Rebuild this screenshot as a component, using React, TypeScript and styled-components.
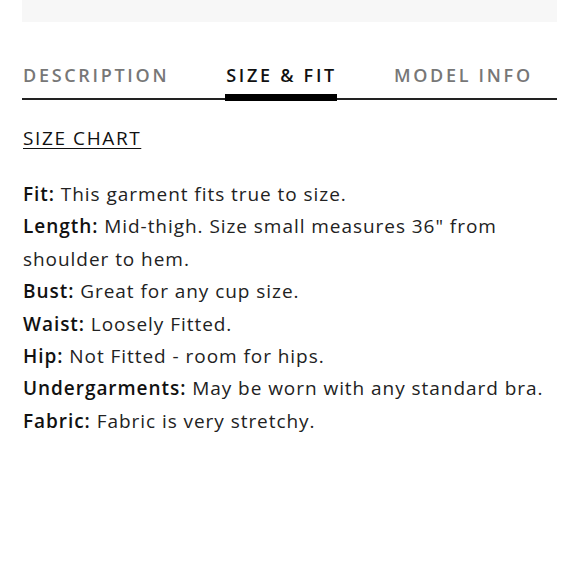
import React from "react";
import styled, { createGlobalStyle } from "styled-components";

const Global = createGlobalStyle`
  html, body { margin: 0; padding: 0; background: #fff; }
  body { font-family: "Open Sans", sans-serif; color: #222; }
`;

const Page = styled.div`
  width: 580px;
  padding: 0 23px 0 22px;
  box-sizing: border-box;
`;

const TopPanel = styled.div`
  height: 22px;
  background: #f7f7f7;
`;

const TabList = styled.div`
  display: flex;
  align-items: flex-end;
  gap: 56px;
  margin-top: 42px;
  border-bottom: 2px solid #222;
`;

const Tab = styled.div<{ $active?: boolean }>`
  font-family: "Open Sans", sans-serif;
  font-weight: 600;
  font-size: 18px;
  line-height: 22px;
  letter-spacing: 2.7px;
  color: ${(p) => (p.$active ? "#111" : "#777")};
  padding: 0 0 8px 1px;
  border-bottom: 7px solid ${(p) => (p.$active ? "#000" : "transparent")};
  margin-bottom: -3px;
  white-space: nowrap;
`;

const Content = styled.div`
  padding: 26px 0 0 1px;
`;

const ChartLink = styled.a`
  display: inline-block;
  font-size: 19px;
  line-height: 24px;
  letter-spacing: 1.6px;
  color: #111;
  text-decoration: underline;
  text-underline-offset: 3px;
  text-decoration-thickness: 1px;
`;

const Specs = styled.div`
  margin-top: 28px;
`;

const SpecLine = styled.p`
  margin: 0;
  font-size: 19px;
  line-height: 32.4px;
  letter-spacing: 0.95px;
  color: #222;
`;

const Label = styled.span`
  font-weight: 600;
  color: #111;
`;

const specs: [string, string][] = [
  ["Fit:", "This garment fits true to size."],
  ["Length:", 'Mid-thigh. Size small measures 36" from shoulder to hem.'],
  ["Bust:", "Great for any cup size."],
  ["Waist:", "Loosely Fitted."],
  ["Hip:", "Not Fitted - room for hips."],
  ["Undergarments:", "May be worn with any standard bra."],
  ["Fabric:", "Fabric is very stretchy."],
];

export default function App() {
  return (
    <Page>
      <Global />
      <TopPanel />
      <TabList>
        <Tab>DESCRIPTION</Tab>
        <Tab $active>SIZE &amp; FIT</Tab>
        <Tab>MODEL INFO</Tab>
      </TabList>
      <Content>
        <ChartLink href="#">SIZE CHART</ChartLink>
        <Specs>
          {specs.map(([l, t]) => (
            <SpecLine key={l}>
              <Label>{l}</Label> {t}
            </SpecLine>
          ))}
        </Specs>
      </Content>
    </Page>
  );
}
